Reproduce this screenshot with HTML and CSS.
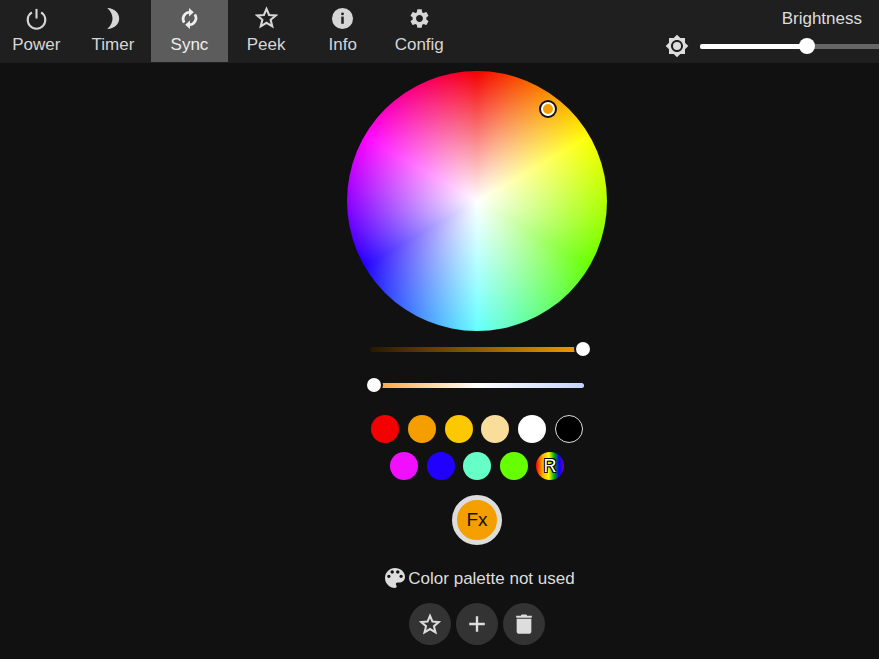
FILE: index.html
```html
<!DOCTYPE html>
<html lang="en">
<head>
<meta charset="utf-8">
<title>WLED</title>
<link rel="stylesheet" href="styles.css">
</head>
<body>
<header class="topbar">
  <nav class="nav">
    <div class="nav-btn">
      <svg class="nav-icon" viewBox="0 0 24 24"><path class="line" d="M7.200 5.600A9.200 9.200 0 1 0 16.800 5.600"/><path class="line" d="M12 2v10"/></svg>
      <span>Power</span>
    </div>
    <div class="nav-btn">
      <svg class="nav-icon" viewBox="0 0 24 24"><path class="solid" d="M6.500 1C14 1.500 19 6 19 12S14 22.500 6.500 23C10.500 19.500 12 15.500 12 12S10.500 4.500 6.500 1z"/></svg>
      <span>Timer</span>
    </div>
    <div class="nav-btn active">
      <svg class="nav-icon" viewBox="0 0 24 24"><path class="line thick" d="M12 5.500A7 7 0 0 0 6.400 16.300"/><path class="line thick" d="M12 18.500A7 7 0 0 0 17.600 7.700"/><path class="solid" d="M11.500 1l5 4.500-5 4.500zM12.500 14l-5 4.500 5 4.500z"/></svg>
      <span>Sync</span>
    </div>
    <div class="nav-btn">
      <svg class="nav-icon star-icon" viewBox="0 0 24 24"><polygon class="line" points="12,3 14.700,9.400 21.600,9.900 16.300,14.400 18,21.200 12,17.500 6,21.200 7.700,14.400 2.400,9.900 9.300,9.400"/></svg>
      <span>Peek</span>
    </div>
    <div class="nav-btn">
      <svg class="nav-icon" viewBox="0 0 24 24"><circle class="solid" cx="12" cy="12" r="11"/><circle class="cut" cx="12" cy="7.200" r="1.500"/><rect class="cut" x="10.700" y="10" width="2.600" height="7.500"/></svg>
      <span>Info</span>
    </div>
    <div class="nav-btn">
      <svg class="nav-icon" viewBox="0 0 24 24"><path class="solid" d="M19.140 12.940c.04-.3.06-.61.06-.94 0-.32-.02-.64-.07-.94l2.030-1.580c.18-.14.23-.41.12-.61l-1.920-3.320c-.12-.22-.37-.29-.59-.22l-2.390.96c-.5-.38-1.030-.7-1.620-.94l-.36-2.540c-.04-.24-.24-.41-.48-.41h-3.840c-.24 0-.43.17-.47.41l-.36 2.540c-.59.24-1.130.57-1.620.94l-2.390-.96c-.22-.08-.47 0-.59.22L2.740 8.870c-.12.21-.08.47.12.61l2.030 1.580c-.05.3-.09.63-.09.94s.02.64.07.94l-2.030 1.580c-.18.14-.23.41-.12.61l1.920 3.320c.12.22.37.29.59.22l2.390-.96c.5.38 1.030.7 1.620.94l.36 2.540c.05.24.24.41.48.41h3.840c.24 0 .44-.17.47-.41l.36-2.540c.59-.24 1.130-.56 1.620-.94l2.390.96c.22.08.47 0 .59-.22l1.920-3.320c.12-.22.07-.47-.12-.61l-2.010-1.580zM12 15.600c-1.980 0-3.600-1.620-3.600-3.600s1.620-3.600 3.600-3.600 3.600 1.620 3.600 3.600-1.620 3.600-3.600 3.600z"/></svg>
      <span>Config</span>
    </div>
  </nav>
  <section class="brightness">
    <div class="brightness-label">Brightness</div>
    <div class="brightness-row">
      <svg class="sun" viewBox="0 0 24 24"><path class="solid" d="M20 15.310L23.310 12 20 8.690V4h-4.690L12 .69 8.690 4H4v4.690L.69 12 4 15.310V20h4.690L12 23.310 15.310 20H20v-4.690zM12 18c-3.310 0-6-2.690-6-6s2.690-6 6-6 6 2.690 6 6-2.690 6-6 6z"/><circle class="solid" cx="12" cy="12" r="4"/></svg>
      <div class="bri-track">
        <div class="bri-fill"></div>
        <div class="thumb bri-thumb"></div>
      </div>
    </div>
  </section>
</header>

<main class="main">
  <div class="wheel">
    <div class="wheel-cursor"></div>
  </div>

  <div class="slider slider-first">
    <div class="track track-value"></div>
    <div class="thumb value-thumb"></div>
  </div>
  <div class="slider slider-second">
    <div class="track track-kelvin"></div>
    <div class="thumb kelvin-thumb"></div>
  </div>

  <div class="swatches swatches-first">
    <div class="swatch c-red"></div>
    <div class="swatch c-orange"></div>
    <div class="swatch c-amber"></div>
    <div class="swatch c-cream"></div>
    <div class="swatch c-white"></div>
    <div class="swatch c-black"></div>
  </div>
  <div class="swatches swatches-second">
    <div class="swatch c-magenta"></div>
    <div class="swatch c-blue"></div>
    <div class="swatch c-mint"></div>
    <div class="swatch c-green"></div>
    <div class="swatch c-rainbow">R</div>
  </div>

  <div class="fx"><div class="fx-inner">Fx</div></div>

  <div class="palette-note">
    <svg class="palette-icon" viewBox="3 3 18 18"><path class="solid" d="M12 3c-4.970 0-9 4.030-9 9s4.030 9 9 9c.83 0 1.500-.67 1.500-1.500 0-.39-.15-.74-.39-1.010-.23-.26-.38-.61-.38-.99 0-.83.67-1.500 1.500-1.500H16c2.760 0 5-2.240 5-5 0-4.420-4.030-8-9-8zm-5.500 9c-.83 0-1.500-.67-1.500-1.500S5.670 9 6.500 9 8 9.670 8 10.500 7.330 12 6.500 12zm3-4C8.670 8 8 7.330 8 6.500S8.670 5 9.500 5s1.500.67 1.500 1.500S10.330 8 9.500 8zm5 0c-.83 0-1.500-.67-1.500-1.500S13.670 5 14.500 5s1.500.67 1.500 1.500S15.330 8 14.500 8zm3 4c-.83 0-1.500-.67-1.500-1.500S16.670 9 17.500 9s1.500.67 1.500 1.500-.67 1.500-1.500 1.500z"/></svg>
    <span>Color palette not used</span>
  </div>

  <div class="actions">
    <div class="action">
      <svg class="action-icon" viewBox="0 0 24 24"><polygon class="line" points="12,3 14.700,9.400 21.600,9.900 16.300,14.400 18,21.200 12,17.500 6,21.200 7.700,14.400 2.400,9.900 9.300,9.400"/></svg>
    </div>
    <div class="action">
      <svg class="action-icon" viewBox="0 0 24 24"><path class="solid" d="M10.700 3.500h2.600v7.200h7.200v2.600h-7.200v7.200h-2.600v-7.200H3.500v-2.600h7.200z"/></svg>
    </div>
    <div class="action">
      <svg class="action-icon" viewBox="0 0 24 24"><path class="solid" d="M9.500 1.500h5l1 1.500h5v2.200h-17V3h5zM4 6.200h16V20.500c0 1.100-.9 2-2 2H6c-1.100 0-2-.9-2-2z"/></svg>
    </div>
  </div>
</main>
</body>
</html>
```

FILE: styles.css
```css
* {
  box-sizing: border-box;
}

html,
body {
  margin: 0;
  height: 100%;
  overflow: hidden;
}

body {
  background: #111;
  color: #ddd;
  font-family: "Liberation Sans", Arial, sans-serif;
  font-size: 17px;
}

svg {
  display: block;
}

.line {
  fill: none;
  stroke: currentColor;
  stroke-width: 2.200;
}

.thick {
  stroke-width: 2.800;
}

.solid {
  fill: currentColor;
}

.cut {
  fill: #1f1f1f;
}

.topbar {
  display: flex;
  height: 63px;
  background: #1f1f1f;
}

.nav {
  display: flex;
  height: 62px;
  margin-left: -2px;
}

.nav-btn {
  width: 76.600px;
  display: flex;
  flex-direction: column;
  align-items: center;
  padding-top: 7px;
  color: #d6d6d6;
}

.nav-btn span {
  margin-top: 5px;
  line-height: 20px;
}

.nav-icon {
  width: 23px;
  height: 23px;
}

.star-icon {
  margin-top: -1px;
  margin-bottom: 1px;
}

.active {
  background: #5c5c5c;
  color: #eee;
}

.brightness {
  margin-left: auto;
  width: 213px;
  display: flex;
  flex-direction: column;
}

.brightness-label {
  text-align: right;
  padding: 9px 17px 0 0;
  line-height: 20px;
}

.brightness-row {
  display: flex;
  align-items: center;
  margin-top: 5px;
}

.sun {
  width: 24px;
  height: 24px;
  color: #ddd;
  margin-left: -1px;
  flex: none;
}

.bri-track {
  position: relative;
  margin-left: 11px;
  flex: 1;
  height: 5px;
  background: #666;
}

.bri-fill {
  width: 107px;
  height: 5px;
  border-radius: 3px 0 0 3px;
  background: #fff;
}

.thumb {
  position: absolute;
  top: 50%;
  width: 14px;
  height: 14px;
  border-radius: 50%;
  background: #fff;
  box-shadow: 0 0 0 2px #111;
  transform: translate(-50%, -50%);
}

.bri-thumb {
  left: 107px;
  width: 16px;
  height: 16px;
  box-shadow: none;
}

.main {
  display: flex;
  flex-direction: column;
  align-items: center;
  padding: 8px 0 0 75px;
}

.wheel {
  position: relative;
  width: 260px;
  height: 260px;
  border-radius: 50%;
  background:
    radial-gradient(circle closest-side, #fff 0%, rgba(255, 255, 255, 0) 100%),
    conic-gradient(#f50000, #ff0, #6f0, #6ff, #20f, #f0f, #f50000);
}

.wheel-cursor {
  position: absolute;
  left: 201px;
  top: 38px;
  width: 14px;
  height: 14px;
  border-radius: 50%;
  border: 2px solid #fff;
  background: #f59e00;
  box-shadow: 0 0 0 2px #111;
  transform: translate(-50%, -50%);
}

.slider {
  position: relative;
  width: 214px;
  height: 20px;
}

.slider-first {
  margin-top: 8px;
}

.slider-second {
  margin-top: 16px;
}

.track {
  position: absolute;
  left: 0;
  right: 0;
  top: 8px;
  height: 5px;
  border-radius: 3px;
}

.track-value {
  background: linear-gradient(90deg, #281800 0%, #f59e00 100%);
}

.track-kelvin {
  background: linear-gradient(90deg, #ff9f2e 0%, #fff 50%, #c5d5ff 100%);
}

.value-thumb {
  left: 213px;
}

.kelvin-thumb {
  left: 4px;
}

.swatches {
  display: flex;
}

.swatches-first {
  margin-top: 20px;
  gap: 8.800px;
}

.swatches-second {
  margin-top: 9px;
  gap: 8.500px;
}

.swatch {
  width: 28px;
  height: 28px;
  border-radius: 50%;
}

.c-red { background: #f50000; }
.c-orange { background: #f59e00; }
.c-amber { background: #fcc800; }
.c-cream { background: #f9dd9a; }
.c-white { background: #fff; }
.c-black { background: #000; border: 1px solid #ddd; }
.c-magenta { background: #f010ff; }
.c-blue { background: #2200ff; }
.c-mint { background: #66ffc8; }
.c-green { background: #66ff00; }

.c-rainbow {
  background: linear-gradient(90deg, #f00, #fa0, #ff0 45%, #0a0 65%, #00f 82%, #70a);
  color: #fff;
  font-size: 18px;
  line-height: 28px;
  text-align: center;
  text-shadow: -1px -1px 0 #000, 1px -1px 0 #000, -1px 1px 0 #000, 1px 1px 0 #000;
}

.fx {
  margin-top: 15px;
  width: 50px;
  height: 50px;
  border-radius: 50%;
  border: 5px solid #ddd;
  background: #f59e00;
}

.fx-inner {
  color: #111;
  font-size: 19px;
  line-height: 40px;
  text-align: center;
}

.palette-note {
  display: flex;
  align-items: center;
  gap: 3px;
  margin: 23px 0 0 6px;
  height: 22px;
}

.palette-icon {
  width: 20px;
  height: 20px;
  margin-top: -3px;
}

.actions {
  display: flex;
  gap: 5px;
  margin-top: 13px;
}

.action {
  width: 42px;
  height: 42px;
  border-radius: 50%;
  background: #333;
  display: flex;
  align-items: center;
  justify-content: center;
}

.action-icon {
  width: 22px;
  height: 22px;
}
```
